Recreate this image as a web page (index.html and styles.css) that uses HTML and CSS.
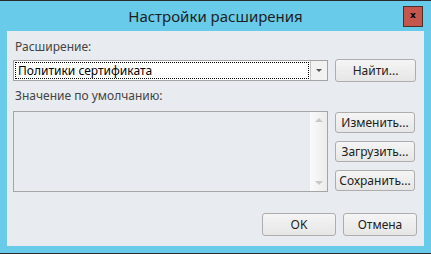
FILE: index.html
```html
<!DOCTYPE html>
<html lang="ru">
<head>
	<meta charset="UTF-8">
	<title>Настройки расширения</title>
	<link rel="stylesheet" href="styles.css">
</head>
<body>
	<div class="window">
		<div class="titlebar">
			<span class="title">Настройки расширения</span>
			<span class="close">x</span>
		</div>
		<div class="client">
			<div class="label">Расширение:</div>
			<div class="row">
				<div class="combo">
					<div class="combo-text"><span>Политики сертификата</span></div>
					<div class="combo-arrow"><span class="tri-down"></span></div>
				</div>
				<a href="javascript:void(0);" class="btn btn-find">Найти...</a>
			</div>
			<div class="label label2">Значение по умолчанию:</div>
			<div class="row row-top">
				<div class="memo">
					<div class="memo-body"></div>
					<div class="scroll">
						<span class="tri-up-light"></span>
						<span class="tri-down-light"></span>
					</div>
				</div>
				<div class="side">
					<a href="javascript:void(0);" class="btn btn-side">Изменить...</a>
					<a href="javascript:void(0);" class="btn btn-side">Загрузить...</a>
					<a href="javascript:void(0);" class="btn btn-side">Сохранить...</a>
				</div>
			</div>
			<div class="footer">
				<a href="javascript:void(0);" class="btn btn-foot">OK</a>
				<a href="javascript:void(0);" class="btn btn-foot">Отмена</a>
			</div>
		</div>
	</div>
</body>
</html>
```

FILE: styles.css
```css
*{
	box-sizing: border-box;
}
body{
	margin: 0;
	font-family: 'Noto Sans', 'Open Sans', sans-serif;
}
.window{
	width: 431px;
	height: 254px;
	background: #68cbe9;
	border-top: 1px solid #2b2b2b;
	border-bottom: 1px solid #2b2b2b;
}
.titlebar{
	position: relative;
	height: 30px;
	text-align: center;
}
.title{
	display: inline-block;
	font-size: 15px;
	line-height: 30px;
	color: #1e1e1e;
}
.close{
	position: absolute;
	left: 403px;
	top: 5px;
	width: 20px;
	height: 21px;
	background: #c4564e;
	border: 1px solid #4b2f2d;
	font-family: 'DejaVu Sans', sans-serif;
	font-weight: bold;
	font-size: 9px;
	line-height: 17px;
	text-align: center;
	color: #000;
}
.client{
	margin: 0 7px;
	height: 215px;
	background: #e8ebf0;
	padding: 8px 7px 0 6px;
	font-size: 12px;
	color: #333;
}
.label{
	height: 16px;
	line-height: 16px;
	padding-left: 2px;
	color: #444;
}
.label2{
	margin-top: 6px;
}
.row{
	display: flex;
	align-items: center;
	gap: 7px;
	margin-top: 4px;
}
.row-top{
	align-items: flex-start;
	margin-top: 7px;
}
.combo{
	display: flex;
	width: 315px;
	height: 21px;
	border: 1px solid #a3a3a3;
	background: #fff;
}
.combo-text{
	flex: 1;
	padding: 1px;
}
.combo-text span{
	display: block;
	height: 17px;
	border: 1px dotted #000;
	line-height: 15px;
	padding-left: 2px;
	color: #000;
}
.combo-arrow{
	width: 17px;
	border-left: 1px solid #c4c4c4;
	background: #f2f2f2;
	display: flex;
	align-items: center;
	justify-content: center;
}
.tri-down{
	width: 0;
	height: 0;
	border-left: 3px solid transparent;
	border-right: 3px solid transparent;
	border-top: 3px solid #555;
}
.btn{
	display: block;
	height: 21px;
	line-height: 19px;
	border: 1px solid #adadad;
	border-radius: 3px;
	background: linear-gradient(#f5f5f5, #e6e6e6);
	text-align: center;
	text-decoration: none;
	color: #222;
	font-size: 12px;
}
.btn-find{
	width: 81px;
	height: 23px;
	line-height: 21px;
}
.memo{
	display: flex;
	width: 315px;
	height: 81px;
	border: 1px solid #a5a5a5;
}
.memo-body{
	flex: 1;
}
.scroll{
	width: 17px;
	background: linear-gradient(to right, #fafafa, #ececec);
	display: flex;
	flex-direction: column;
	justify-content: space-between;
	align-items: center;
	padding: 6px 0 6px;
}
.tri-up-light{
	width: 0;
	height: 0;
	border-left: 4px solid transparent;
	border-right: 4px solid transparent;
	border-bottom: 4px solid #c8c8c8;
}
.tri-down-light{
	width: 0;
	height: 0;
	border-left: 4px solid transparent;
	border-right: 4px solid transparent;
	border-top: 4px solid #c8c8c8;
}
.side{
	display: flex;
	flex-direction: column;
	gap: 8px;
	margin-top: 1px;
}
.btn-side{
	width: 80px;
}
.footer{
	display: flex;
	justify-content: flex-end;
	gap: 7px;
	margin-top: 21px;
}
.btn-foot{
	width: 74px;
	height: 23px;
	line-height: 21px;
}
```
